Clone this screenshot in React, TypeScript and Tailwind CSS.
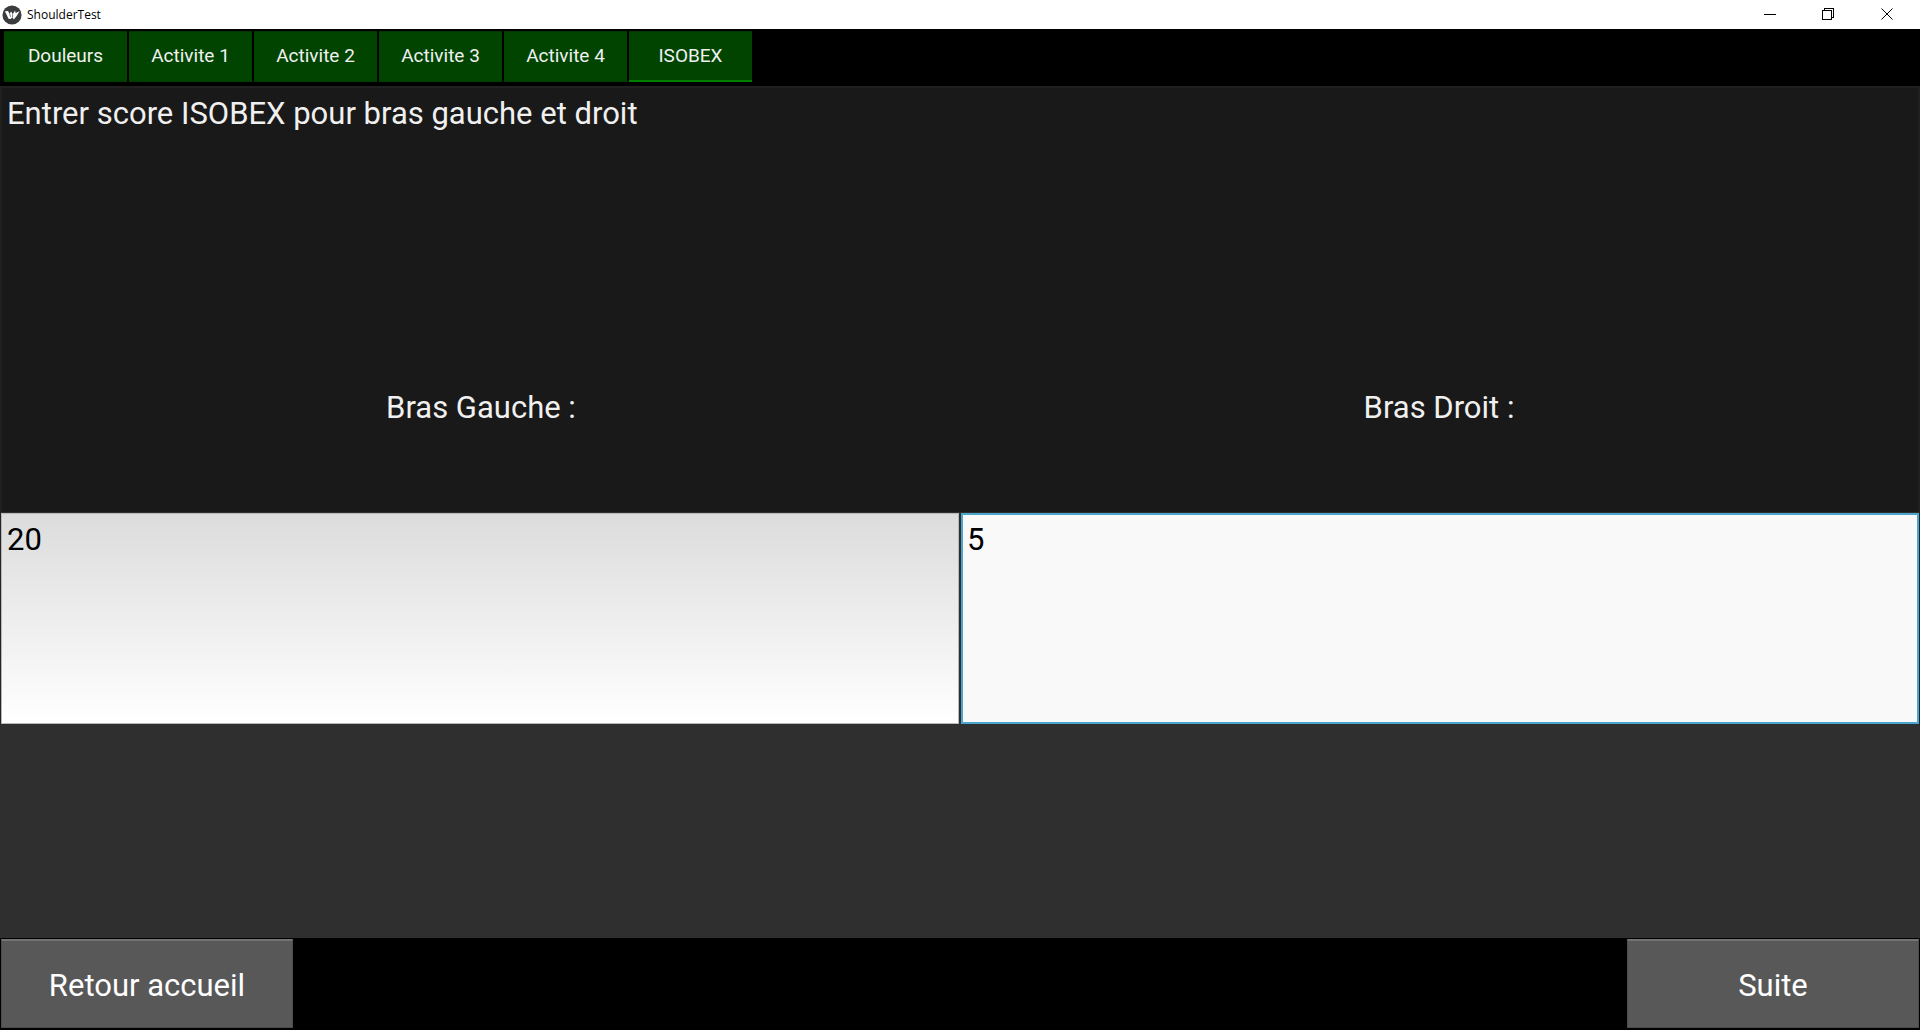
import { useState } from "react";

const tabs = ["Douleurs", "Activite 1", "Activite 2", "Activite 3", "Activite 4", "ISOBEX"];

function AppIcon() {
  return (
    <svg viewBox="0 0 18 18" className="size-5" aria-hidden="true">
      <circle cx="9" cy="9" r="8.6" fill="#3b3c3e" />
      <path d="M2.6 5.6 5.4 5.4 6.8 7.8 8.3 5.8 9.6 8.4 11.7 4.9 12.3 7.3 15.8 5.6 13.2 9.9 10.6 13 9.4 11 7.8 12.5 5.8 12.3 4.4 9.2Z" fill="#fff" />
      <path d="M6.8 7.8 7.8 10.6M9.6 8.4 9.5 10.9" stroke="#3b3c3e" strokeWidth=".6" />
    </svg>
  );
}

function TitleBar() {
  return (
    <header className="flex h-[29px] items-center bg-white pl-0.5 text-black">
      <AppIcon />
      <h1 className="ml-[5px] flex-1 font-['Open_Sans',sans-serif] text-[12px] leading-4">ShoulderTest</h1>
      <button type="button" aria-label="Minimize" className="flex h-full w-[58px] items-center justify-center">
        <svg width="12" height="12" shapeRendering="crispEdges"><path d="M0 5.5H12" stroke="#000" /></svg>
      </button>
      <button type="button" aria-label="Restore" className="flex h-full w-[58px] items-center justify-center pb-px">
        <svg width="12" height="12" fill="none" stroke="#000" shapeRendering="crispEdges">
          <path d="M.5 2.5H9.5V11.5H.5ZM2.5 2.5V.5H11.5V9.5H9.5" />
        </svg>
      </button>
      <button type="button" aria-label="Close" className="mr-[3px] flex h-full w-[60px] items-center justify-center pb-px">
        <svg width="12" height="12" stroke="#000"><path d="M.5 .5 11.5 11.5M11.5 .5 .5 11.5" /></svg>
      </button>
    </header>
  );
}

export default function App() {
  const [active, setActive] = useState("ISOBEX");
  const [left, setLeft] = useState("20");
  const [right, setRight] = useState("5");

  return (
    <div className="flex min-h-screen flex-col bg-black font-[Roboto,sans-serif] text-[31px] leading-9 text-[#f0f0f0]">
      <TitleBar />
      <nav role="tablist" className="flex gap-0.5 px-1 pt-0.5 pb-1 text-[19px] leading-6">
        {tabs.map((tab) => (
          <button
            key={tab}
            type="button"
            role="tab"
            aria-selected={tab === active}
            onClick={() => setActive(tab)}
            className={`h-[51px] w-[123px] border-t border-b-2 border-t-[#003800] bg-[#004400] ${
              tab === active ? "border-b-[#008000]" : "border-b-[#004000]"
            }`}
          >
            {tab}
          </button>
        ))}
      </nav>
      <main className="grid flex-1 grid-rows-4 bg-[#2f2f2f]">
        <div className="row-span-2 grid grid-rows-2 border-2 border-b-0 border-[#202020] bg-[#191919]">
          <p className="px-[5px] pt-2">Entrer score ISOBEX pour bras gauche et droit</p>
          <div className="grid grid-cols-2 items-center pt-1 text-center">
            <label htmlFor="left">Bras Gauche :</label>
            <label htmlFor="right">Bras Droit :</label>
          </div>
        </div>
        <div className="grid grid-cols-2 gap-0.5 border-x border-[#242424] py-px text-black">
          <textarea
            id="left"
            value={left}
            onChange={(e) => setLeft(e.target.value)}
            className="block resize-none border border-[#b8b8b8] bg-linear-to-b from-[#dcdcdc] to-white px-[5px] pt-2 outline-none"
          />
          <textarea
            id="right"
            value={right}
            onChange={(e) => setRight(e.target.value)}
            className="block resize-none border-2 border-[#4ba6ce] bg-[#f9f9f9] px-1 pt-[7px] outline-none"
          />
        </div>
      </main>
      <footer className="flex justify-between px-px pt-px pb-0.5">
        <button type="button" className="h-[89px] w-[292px] border border-t-2 border-[#4c4c4c] border-t-[#737373] bg-[#585858] pt-1 text-white">
          Retour accueil
        </button>
        <button type="button" className="h-[89px] w-[292px] border border-t-2 border-[#4c4c4c] border-t-[#737373] bg-[#585858] pt-1 text-white">
          Suite
        </button>
      </footer>
    </div>
  );
}
